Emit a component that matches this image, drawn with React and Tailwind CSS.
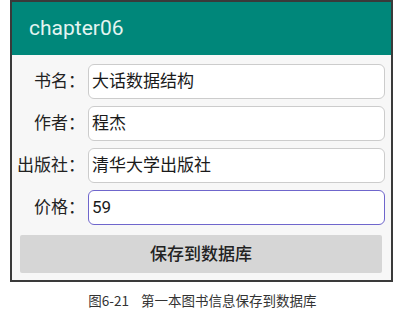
export default function App() {
  const rows = [
    { label: "书名：", value: "大话数据结构" },
    { label: "作者：", value: "程杰" },
    { label: "出版社：", value: "清华大学出版社" },
    { label: "价格：", value: "59", focus: true },
  ];
  const font = { fontFamily: '"Roboto", "Noto Sans CJK SC", sans-serif' };
  return (
    <div className="w-[405px] h-[321px] bg-white flex flex-col" style={font}>
      <div className="ml-[10px] w-[383px] h-[282px] border-2 border-[#3a3a3a] flex flex-col">
        <div className="h-[53px] bg-[#00877a] flex items-center pl-[17px]">
          <span className="text-[21px] text-[#e3f4f1] leading-none">chapter06</span>
        </div>
        <div className="flex-1 bg-[#f7f7f7] flex flex-col pt-[9px] pr-[6px]">
          <div className="flex flex-col gap-[7px]">
            {rows.map((r) => (
              <div key={r.label} className="flex items-center">
                <div className="w-[74px] text-right text-[17px] text-[#222] leading-none pr-[1px]">
                  {r.label}
                </div>
                <div
                  className={
                    "ml-[2px] flex-1 h-[35px] rounded-[6px] bg-white flex items-center pl-[3px] text-[17px] text-[#1a1a1a] leading-none border " +
                    (r.focus ? "border-[#6f66cc] border-[1.5px]" : "border-[#cccccc]")
                  }
                >
                  {r.value}
                </div>
              </div>
            ))}
          </div>
          <div className="mt-[10px] ml-[8px] mr-[3px] h-[38px] bg-[#d6d6d6] rounded-[2px] flex items-center justify-center text-[17px] text-[#222] font-medium leading-none">
            保存到数据库
          </div>
        </div>
      </div>
      <div className="flex-1 flex items-center justify-center pb-[2px]">
        <span className="text-[13.5px] text-[#333] leading-none whitespace-pre" style={{ fontFamily: '"Noto Sans CJK SC", sans-serif' }}>
          {"图6-21    第一本图书信息保存到数据库"}
        </span>
      </div>
    </div>
  );
}
